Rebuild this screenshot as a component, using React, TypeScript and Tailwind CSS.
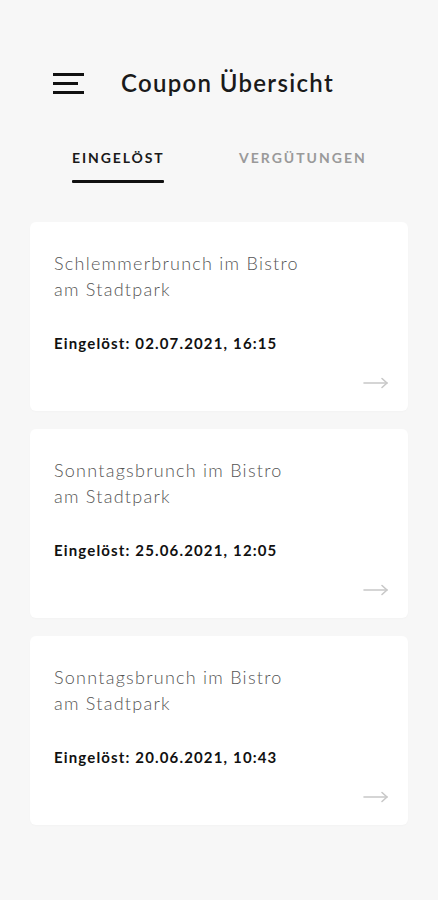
import React from "react";

const items = [
  { title: ["Schlemmerbrunch im Bistro", "am Stadtpark"], date: "Eingelöst: 02.07.2021, 16:15" },
  { title: ["Sonntagsbrunch im Bistro", "am Stadtpark"], date: "Eingelöst: 25.06.2021, 12:05" },
  { title: ["Sonntagsbrunch im Bistro", "am Stadtpark"], date: "Eingelöst: 20.06.2021, 10:43" },
];

function Arrow() {
  return (
    <svg width="26" height="12" viewBox="0 0 26 12" fill="none" stroke="#c8c8c8" strokeWidth="1.6" strokeLinecap="round" strokeLinejoin="round">
      <path d="M1 6h23" />
      <path d="M19 1.5l5 4.5-5 4.5" />
    </svg>
  );
}

export default function App() {
  return (
    <div className="w-[438px] h-[900px] bg-[#f7f7f7] font-['Lato',sans-serif] overflow-hidden">
      <div className="flex items-center pt-[66px] h-[100px] pl-[53px]">
        <div className="flex flex-col gap-[6px] w-[31px]">
          <div className="h-[3px] w-[31px] bg-[#111]" />
          <div className="h-[3px] w-[25px] bg-[#111]" />
          <div className="h-[3px] w-[31px] bg-[#111]" />
        </div>
        <div className="ml-[37px] text-[24px] font-semibold text-[#1a1a1a] tracking-[1.3px] leading-[30px] whitespace-nowrap">
          Coupon Übersicht
        </div>
      </div>
      <div className="flex mt-[48px] pl-[72px]">
        <div className="flex flex-col w-[92px] items-start">
          <div className="text-[14px] font-bold tracking-[1.9px] text-[#1a1a1a] leading-[20px] whitespace-nowrap">EINGELÖST</div>
          <div className="mt-[12px] h-[3px] w-[92px] bg-[#111] rounded-[1px]" />
        </div>
        <div className="ml-[75px] text-[14px] font-bold tracking-[2px] text-[#9a9a9a] leading-[20px] whitespace-nowrap">VERGÜTUNGEN</div>
      </div>
      <div className="flex flex-col gap-[18px] mt-[39px] px-[30px]">
        {items.map((it, i) => (
          <div key={i} className="bg-white rounded-[6px] h-[189px] flex flex-col pl-[24px] pr-[19px] pt-[28px] pb-[22px] shadow-[0_1px_2px_rgba(0,0,0,0.02)]">
            <div className="text-[18px] font-light text-[#555] leading-[26px] tracking-[1.25px] whitespace-nowrap">
              {it.title[0]}
              <br />
              {it.title[1]}
            </div>
            <div className="mt-[31px] text-[15px] font-bold text-[#111] leading-[20px] tracking-[1.15px] whitespace-nowrap">{it.date}</div>
            <div className="mt-auto flex justify-end">
              <Arrow />
            </div>
          </div>
        ))}
      </div>
    </div>
  );
}
